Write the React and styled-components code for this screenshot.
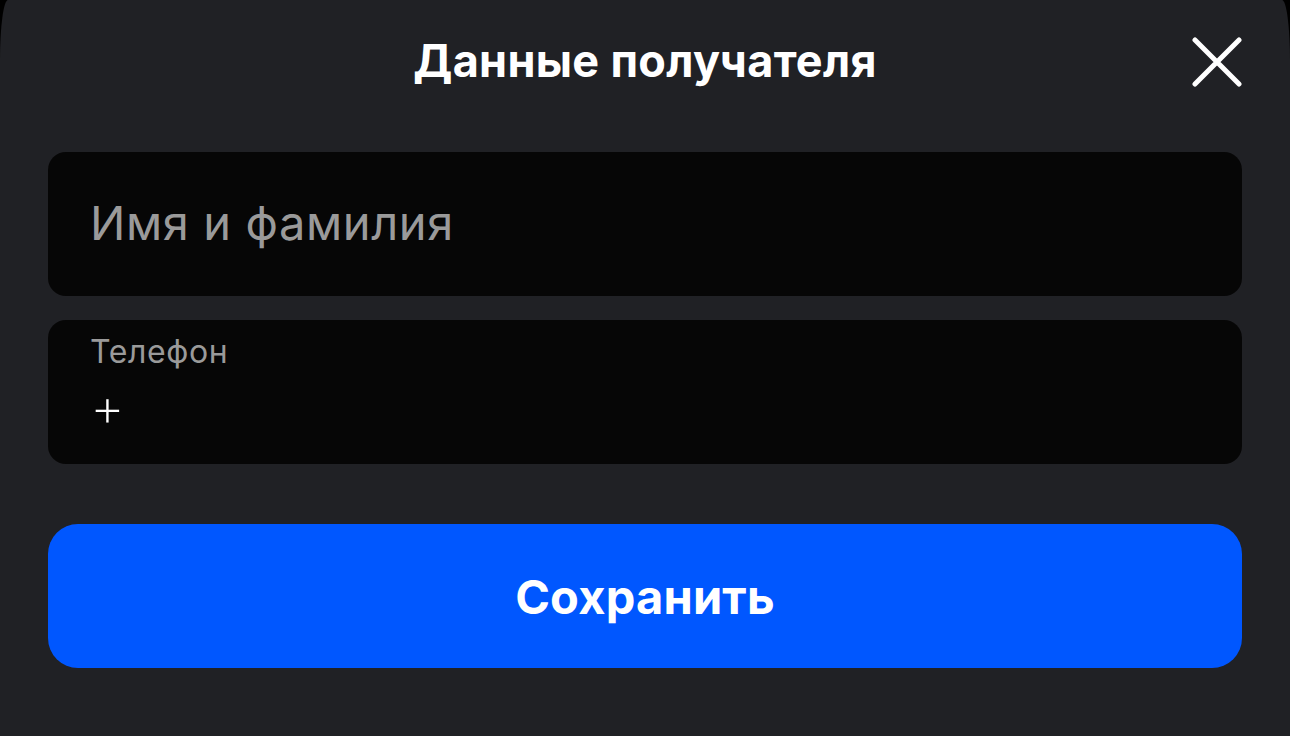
import React from 'react';
import styled, { createGlobalStyle } from 'styled-components';

const GlobalStyle = createGlobalStyle`
  html, body {
    margin: 0;
    padding: 0;
    background: #000;
  }
  body {
    font-family: 'Inter', 'Noto Sans', sans-serif;
  }
`;

const Sheet = styled.div`
  box-sizing: border-box;
  width: 1290px;
  height: 736px;
  background-color: #202125;
  border-top-left-radius: 8px 60px;
  border-top-right-radius: 8px 60px;
  padding: 0 48px;
  display: flex;
  flex-direction: column;
`;

const Header = styled.div`
  height: 124px;
  display: flex;
  align-items: center;
  justify-content: center;
  position: relative;
  padding-bottom: 4px;
  box-sizing: border-box;
`;

const Title = styled.h1`
  margin: 0;
  color: #fff;
  font-size: 45px;
  font-weight: 700;
  letter-spacing: 0.3px;
`;

const CloseButton = styled.button`
  position: absolute;
  right: 0;
  top: 37px;
  width: 50px;
  height: 50px;
  padding: 0;
  border: 0;
  background: none;
  cursor: pointer;
  svg {
    display: block;
  }
`;

const Form = styled.div`
  display: flex;
  flex-direction: column;
  gap: 24px;
  padding-top: 28px;
`;

const Field = styled.label`
  box-sizing: border-box;
  height: 144px;
  border-radius: 18px;
  background-color: #060606;
  padding: 0 42px;
  display: flex;
  flex-direction: column;
  justify-content: ${(props) => (props.filled ? 'flex-start' : 'center')};
`;

const Placeholder = styled.span`
  color: #9a9a9a;
  font-size: 47px;
  font-weight: 400;
  letter-spacing: 0.6px;
  padding-bottom: 4px;
`;

const Label = styled.span`
  color: #9a9a9a;
  font-size: 32px;
  letter-spacing: 0.6px;
  padding-top: 12px;
`;

const Value = styled.span`
  color: #fff;
  font-size: 54px;
  font-weight: 200;
  padding-top: 4px;
  line-height: 1.2;
`;

const SaveButton = styled.button`
  margin-top: 60px;
  height: 144px;
  border: 0;
  border-radius: 30px;
  background-color: #0057ff;
  color: #fff;
  font-family: 'Inter', 'Noto Sans', sans-serif;
  font-size: 47px;
  font-weight: 700;
  letter-spacing: 0.2px;
  cursor: pointer;
`;

const App = () => (
  <>
    <GlobalStyle />
    <Sheet>
      <Header>
        <Title>Данные получателя</Title>
        <CloseButton aria-label="Закрыть">
          <svg width="50" height="50" viewBox="0 0 50 50" fill="none">
            <path d="M3 3L47 47M47 3L3 47" stroke="#fff" strokeWidth="5" strokeLinecap="round" />
          </svg>
        </CloseButton>
      </Header>
      <Form>
        <Field>
          <Placeholder>Имя и фамилия</Placeholder>
        </Field>
        <Field filled>
          <Label>Телефон</Label>
          <Value>+</Value>
        </Field>
      </Form>
      <SaveButton>Сохранить</SaveButton>
    </Sheet>
  </>
);

export default App;
